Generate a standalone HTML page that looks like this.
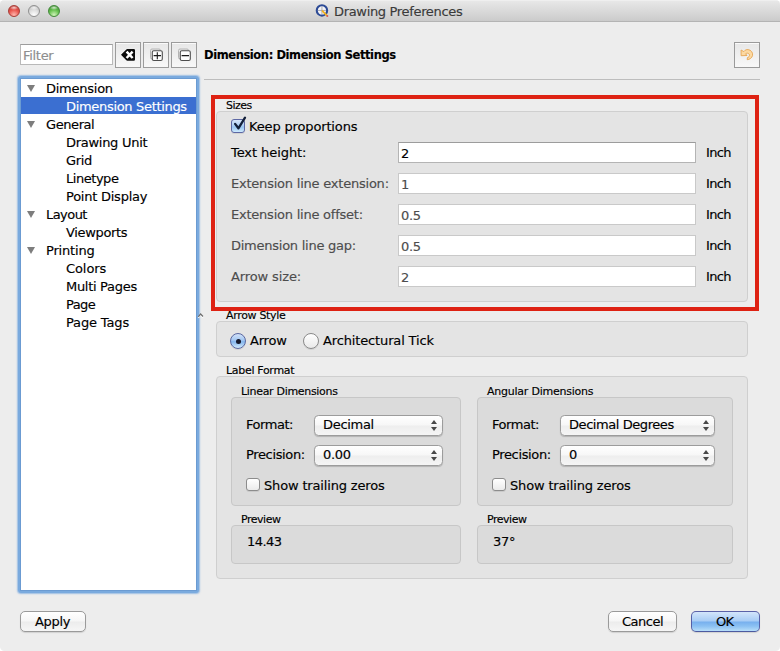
<!DOCTYPE html>
<html><head><meta charset="utf-8"><title>Drawing Preferences</title>
<style>
*{box-sizing:border-box;margin:0;padding:0}
html,body{width:780px;height:651px;background:#fff;overflow:hidden}
body{font-family:"DejaVu Sans","Liberation Sans",sans-serif;font-size:13px;color:#000;position:relative}
.win{position:absolute;left:0;top:0;width:780px;height:651px;background:#ededed;border-radius:4.5px;overflow:hidden}
.tb{position:absolute;left:0;top:0;width:780px;height:22px;background:linear-gradient(#f3f3f3 0,#e7e7e7 1.5px,#cbcbcb 21px);border-bottom:1px solid #b4b4b4}
.tl{position:absolute;top:4.5px;width:12px;height:12px;border-radius:50%}
.t{position:absolute;white-space:nowrap;line-height:16px;height:16px;letter-spacing:-0.3px;-webkit-text-stroke:.15px currentColor}
.s{font-size:11px;line-height:14px;height:14px;letter-spacing:-0.2px}
.g{color:#4d4d4d}
.gb{position:absolute;background:#e4e4e4;border:1px solid #cfcfcf;border-radius:4px}
.gb2{position:absolute;background:#dbdbdb;border:1px solid #c7c7c7;border-radius:4px}
.inp{position:absolute;left:398px;width:298px;height:21px;background:#fff;border:1px solid #c9c9c9}
.inp.en{border-color:#9c9c9c #b4b4b4 #b4b4b4 #b4b4b4}
.btn{position:absolute;top:611px;height:21px;border:1px solid #9a9a9a;border-radius:5px;background:linear-gradient(#ffffff,#f6f6f6 48%,#ececec 52%,#f6f6f6);box-shadow:0 1px 1px rgba(0,0,0,.12)}
.btn.ok{border-color:#5b62a8 #5560a8 #4c5aa0;background:linear-gradient(#d3e5fb,#a8ccf5 47%,#77b0ee 53%,#8cc1f3 75%,#b8def9)}
.tbtn{position:absolute;top:42px;width:26px;height:26px;border:1px solid #9c9c9c;background:linear-gradient(#e7e7e7,#f8f8f8);box-shadow:inset 0 1px 0 rgba(255,255,255,.8)}
.sel{position:absolute;height:21px;border:1px solid #9c9c9c;border-radius:4.5px;background:linear-gradient(#ffffff,#f7f7f7 48%,#eeeeee 52%,#f5f5f5);box-shadow:0 1px 1px rgba(0,0,0,.18)}
.sel i{position:absolute;right:5px;width:0;height:0;border-left:3px solid transparent;border-right:3px solid transparent}
.sel i.u{top:4px;border-bottom:4.5px solid #484848}
.sel i.d{top:10.7px;border-top:4.5px solid #484848}
.cb{position:absolute;width:14px;height:13px;border:1px solid #8c8c8c;border-radius:3px;background:linear-gradient(#ffffff,#ebebeb);box-shadow:0 1px 0 rgba(0,0,0,.08)}
.cb.on{height:13.5px;border-color:#5d68a4;background:linear-gradient(#d8e6fa,#abcdf4 48%,#98c5f2 58%,#cdeafd)}
.rb{position:absolute;width:16px;height:16px;border:1px solid #8a8a8a;border-radius:50%;background:linear-gradient(#ffffff,#e9e9e9);box-shadow:0 1px 0 rgba(0,0,0,.08)}
.rb.on{border-color:#5a67a0;background:linear-gradient(#d2e2f9,#a2c6f1 45%,#84b5ec 55%,#d2eafc)}
.rb.on:after{content:"";position:absolute;left:4.5px;top:4.5px;width:5px;height:5px;border-radius:50%;background:#15182a}
.tri{position:absolute;left:27px;width:0;height:0;border-left:4.5px solid transparent;border-right:4.5px solid transparent;border-top:7.5px solid #7d7d7d}
.ring{position:absolute;left:18px;top:76px;width:181px;height:517px;border-radius:3.5px;background:#7aaade;box-shadow:0 0 1.5px .5px rgba(122,170,222,.7)}
.tree{position:absolute;left:21px;top:79px;width:175px;height:511px;background:#fff;box-shadow:0 0 0 1px #6b9bd2}
.row{position:absolute;left:21px;width:175px;height:17px;background:#3b6fd1}
</style></head><body>
<div class="win">
<div class="tb">
 <div class="tl" style="left:8px;background:radial-gradient(ellipse 45% 22% at 50% 17%,rgba(255,255,255,.75),rgba(255,255,255,0)),radial-gradient(circle at 50% 90%,#ffb9b0 0,#ea5850 50%,#b9362f 95%);border:1px solid #a63d37"></div>
 <div class="tl" style="left:28px;background:radial-gradient(ellipse 45% 22% at 50% 17%,rgba(255,255,255,.75),rgba(255,255,255,0)),radial-gradient(circle at 50% 90%,#ffffff 0,#dedede 50%,#b4b4b4 95%);border:1px solid #8f8f8f"></div>
 <div class="tl" style="left:48px;background:radial-gradient(ellipse 45% 22% at 50% 17%,rgba(255,255,255,.75),rgba(255,255,255,0)),radial-gradient(circle at 50% 90%,#d2f4bc 0,#68c250 50%,#37882a 95%);border:1px solid #42893a"></div>
 <svg style="position:absolute;left:314px;top:2px" width="17" height="17" viewBox="0 0 17 17"><circle cx="7.95" cy="8.45" r="5.2" fill="#f4f4f6" stroke="#2d4b96" stroke-width="2.1"/><path d="M7.95 4.5v7.8M4 8.45h7.9" stroke="#9a9aa4" stroke-width=".8"/><path d="M8.6 9.1l4.1 4.2" stroke="#f2b21f" stroke-width="1.9" stroke-linecap="round"/><circle cx="13.3" cy="14.1" r="1" fill="#d4555a"/></svg>
 <div class="t" id="title" style="letter-spacing:-0.33px;left:334px;top:4px;color:#3a3a3a">Drawing Preferences</div>
</div>

<!-- filter row -->
<div style="position:absolute;left:20px;top:44px;width:93px;height:21px;background:#fff;border:1px solid #b9b9b9;border-top-color:#9d9d9d"></div>
<div class="t" id="filter" style="left:23px;top:48px;color:#8e8e8e">Filter</div>
<div class="tbtn" style="left:115px"><svg width="24" height="24" viewBox="0 0 24 24" style="position:absolute;left:0;top:0"><path d="M5 11.85l5.300-5.400a1.400 1.400 0 0 1 1-.45h6.500a1.200 1.200 0 0 1 1.200 1.200v9.300a1.200 1.200 0 0 1-1.200 1.200h-6.500a1.400 1.400 0 0 1-1-.45z" fill="#0c0c0c"/><path d="M10.600 8.700l6 6.300M16.600 8.700l-6 6.300" stroke="#fff" stroke-width="2.500"/></svg></div>
<div class="tbtn" style="left:143px"><svg width="24" height="24" viewBox="0 0 24 24" style="position:absolute;left:0;top:0"><rect x="6.500" y="6" width="10" height="10" rx="1.500" fill="#e9e9e9" stroke="#b4b4b4" stroke-width="1"/><rect x="8.300" y="7.800" width="10" height="9.700" rx="1.500" fill="#fdfdfd" stroke="#4e4e4e" stroke-width="1.100"/><path d="M9.600 12.650h7.400M13.300 9.200v7" stroke="#1a1a1a" stroke-width="1.100"/></svg></div>
<div class="tbtn" style="left:171px"><svg width="24" height="24" viewBox="0 0 24 24" style="position:absolute;left:0;top:0"><rect x="6.500" y="6" width="10" height="10" rx="1.500" fill="#e9e9e9" stroke="#b4b4b4" stroke-width="1"/><rect x="8.300" y="7.800" width="10" height="9.700" rx="1.500" fill="#fdfdfd" stroke="#4e4e4e" stroke-width="1.100"/><path d="M9.600 12.650h7.400" stroke="#1a1a1a" stroke-width="1.100"/></svg></div>
<div class="t" id="hdr" style="letter-spacing:-0.41px;left:204px;top:47px;font-weight:bold;font-size:11.5px">Dimension: Dimension Settings</div>
<div class="tbtn" style="left:734px;border-color:#9a9a9a"><svg width="24" height="24" viewBox="0 0 24 24" style="position:absolute;left:0;top:0"><path d="M6.100 7L6.100 12.700L12 12.500L10.600 10.800C11.500 10.100 12.500 10 13.300 10.400C14.600 11 14.800 12.600 14 13.600C13.600 14.200 13 14.500 12.400 14.600L12.200 16.700C14.500 16.600 17 15 17.600 12.300C18 9.500 16 7 13.200 6.600C11.500 6.400 10 7 8.800 8.600Z" fill="#fcd9a2" stroke="#e5a552" stroke-width=".9" stroke-linejoin="round"/></svg></div>
<div style="position:absolute;left:204px;top:79px;width:556px;height:1px;background:#bdbdbd"></div>

<!-- tree -->
<div class="ring"></div><div class="tree"></div>
<div class="row" style="top:97px"></div>
<div class="tri" style="top:85px"></div>
<div class="t" id="tr0" style="letter-spacing:-0.25px;left:46px;top:81px">Dimension</div>
<div class="t" id="tr1" style="letter-spacing:-0.32px;left:66px;top:99px;color:#fff">Dimension Settings</div>
<div class="tri" style="top:121px"></div>
<div class="t" id="tr2" style="letter-spacing:-0.42px;left:46px;top:117px">General</div>
<div class="t" id="tr3" style="letter-spacing:-0.28px;left:66px;top:135px">Drawing Unit</div>
<div class="t" id="tr4" style="letter-spacing:-0.31px;left:66px;top:153px">Grid</div>
<div class="t" id="tr5" style="letter-spacing:-0.46px;left:66px;top:171px">Linetype</div>
<div class="t" id="tr6" style="letter-spacing:-0.24px;left:66px;top:189px">Point Display</div>
<div class="tri" style="top:211px"></div>
<div class="t" id="tr7" style="letter-spacing:-0.55px;left:46px;top:207px">Layout</div>
<div class="t" id="tr8" style="letter-spacing:-0.34px;left:66px;top:225px">Viewports</div>
<div class="tri" style="top:247px"></div>
<div class="t" id="tr9" style="letter-spacing:-0.19px;left:46px;top:243px">Printing</div>
<div class="t" id="tr10" style="letter-spacing:-0.08px;left:66px;top:261px">Colors</div>
<div class="t" id="tr11" style="letter-spacing:-0.3px;left:66px;top:279px">Multi Pages</div>
<div class="t" id="tr12" style="letter-spacing:-0.57px;left:66px;top:297px">Page</div>
<div class="t" id="tr13" style="letter-spacing:-0.15px;left:66px;top:315px">Page Tags</div>
<!-- sizes -->
<div class="gb" style="left:216px;top:111px;width:532px;height:191px"></div>
<div class="t s" id="l_sizes" style="letter-spacing:-0.51px;left:226px;top:99px">Sizes</div>
<div class="cb on" style="left:231px;top:119px"></div>
<svg style="position:absolute;left:229px;top:113px" width="22" height="22" viewBox="0 0 22 22"><path d="M6.100 10.900L9.400 15.300L16 4.700" fill="none" stroke="#13203a" stroke-width="2.300" stroke-linecap="round" stroke-linejoin="round"/></svg>
<div class="t" id="keep" style="letter-spacing:-0.15px;left:249px;top:119px">Keep proportions</div>
<div class="t" id="rl0" style="letter-spacing:-0.07px;left:231px;top:145px">Text height:</div>
<div class="inp en" style="top:142px"></div>
<div class="t" id="rv0" style="left:401px;top:146px">2</div>
<div class="t" id="ru0" style="letter-spacing:-0.62px;left:706px;top:145px">Inch</div>
<div class="t g" id="rl1" style="letter-spacing:-0.22px;left:231px;top:176px">Extension line extension:</div>
<div class="inp" style="top:173px"></div>
<div class="t g" id="rv1" style="left:401px;top:177px">1</div>
<div class="t" id="ru1" style="letter-spacing:-0.62px;left:706px;top:176px">Inch</div>
<div class="t g" id="rl2" style="letter-spacing:-0.23px;left:231px;top:207px">Extension line offset:</div>
<div class="inp" style="top:204px"></div>
<div class="t g" id="rv2" style="left:401px;top:208px">0.5</div>
<div class="t" id="ru2" style="letter-spacing:-0.62px;left:706px;top:207px">Inch</div>
<div class="t g" id="rl3" style="letter-spacing:-0.25px;left:231px;top:238px">Dimension line gap:</div>
<div class="inp" style="top:235px"></div>
<div class="t g" id="rv3" style="left:401px;top:239px">0.5</div>
<div class="t" id="ru3" style="letter-spacing:-0.62px;left:706px;top:238px">Inch</div>
<div class="t g" id="rl4" style="letter-spacing:-0.12px;left:231px;top:269px">Arrow size:</div>
<div class="inp" style="top:266px"></div>
<div class="t g" id="rv4" style="left:401px;top:270px">2</div>
<div class="t" id="ru4" style="letter-spacing:-0.62px;left:706px;top:269px">Inch</div>
<div style="position:absolute;left:211px;top:95px;width:548px;height:216px;border:4px solid #de2213"></div>

<svg style="position:absolute;left:196px;top:311px" width="10" height="10" viewBox="0 0 10 10"><path d="M2.300 6.800L4.600 3.900L7 6.500" fill="none" stroke="#fff" stroke-width="1.200"/><path d="M2.300 5.800L4.600 3L7 5.500" fill="none" stroke="#6e6e6e" stroke-width="1.200"/></svg>
<!-- arrow style -->
<div class="t s" id="l_arrow" style="letter-spacing:-0.32px;left:226px;top:309px">Arrow Style</div>
<div class="gb" style="left:216px;top:321px;width:532px;height:36px"></div>
<div class="rb on" style="left:230px;top:333px"></div>
<div class="t" id="arrow" style="letter-spacing:-0.21px;left:250px;top:333px">Arrow</div>
<div class="rb" style="left:303px;top:333px"></div>
<div class="t" id="tick" style="letter-spacing:-0.14px;left:323px;top:333px">Architectural Tick</div>

<!-- label format -->
<div class="t s" id="l_label" style="letter-spacing:-0.31px;left:226px;top:364px">Label Format</div>
<div class="gb" style="left:216px;top:376px;width:532px;height:203px"></div>

<div class="t s" id="l_lin" style="letter-spacing:-0.31px;left:241px;top:385px">Linear Dimensions</div>
<div class="gb2" style="left:231px;top:397px;width:230px;height:109px"></div>
<div class="t" id="fmt1" style="letter-spacing:-0.45px;left:246px;top:417px">Format:</div>
<div class="sel" style="left:314px;top:415px;width:129px"><i class="u"></i><i class="d"></i></div>
<div class="t" id="dec1" style="left:323px;top:417px">Decimal</div>
<div class="t" id="prec1" style="letter-spacing:-0.36px;left:246px;top:447px">Precision:</div>
<div class="sel" style="left:314px;top:445px;width:129px"><i class="u"></i><i class="d"></i></div>
<div class="t" id="val1" style="left:323px;top:447px">0.00</div>
<div class="cb" style="left:246px;top:478px"></div>
<div class="t" id="show1" style="letter-spacing:-0.16px;left:264px;top:478px">Show trailing zeros</div>
<div class="t s" id="l_prev1" style="letter-spacing:-0.48px;left:241px;top:513px">Preview</div>
<div class="gb2" style="left:231px;top:525px;width:230px;height:39px"></div>
<div class="t" id="pv1" style="letter-spacing:-0.58px;left:247px;top:534px">14.43</div>

<div class="t s" id="l_ang" style="letter-spacing:-0.23px;left:487px;top:385px">Angular Dimensions</div>
<div class="gb2" style="left:477px;top:397px;width:256px;height:109px"></div>
<div class="t" id="fmt2" style="letter-spacing:-0.45px;left:492px;top:417px">Format:</div>
<div class="sel" style="left:560px;top:415px;width:155px"><i class="u"></i><i class="d"></i></div>
<div class="t" id="dec2" style="letter-spacing:-0.43px;left:569px;top:417px">Decimal Degrees</div>
<div class="t" id="prec2" style="letter-spacing:-0.36px;left:492px;top:447px">Precision:</div>
<div class="sel" style="left:560px;top:445px;width:155px"><i class="u"></i><i class="d"></i></div>
<div class="t" id="val2" style="left:569px;top:447px">0</div>
<div class="cb" style="left:492px;top:478px"></div>
<div class="t" id="show2" style="letter-spacing:-0.16px;left:510px;top:478px">Show trailing zeros</div>
<div class="t s" id="l_prev2" style="letter-spacing:-0.48px;left:487px;top:513px">Preview</div>
<div class="gb2" style="left:477px;top:525px;width:256px;height:39px"></div>
<div class="t" id="pv2" style="left:493px;top:534px">37°</div>

<!-- buttons -->
<div class="btn" style="left:20px;width:66px"></div>
<div class="t" id="apply" style="letter-spacing:-0.29px;left:35px;top:614px">Apply</div>
<div class="btn" style="left:608px;width:69px"></div>
<div class="t" id="cancel" style="letter-spacing:-0.5px;left:622px;top:614px">Cancel</div>
<div class="btn ok" style="left:691px;width:69px"></div>
<div class="t" id="ok" style="letter-spacing:-0.84px;left:716px;top:614px">OK</div>
</div>
</body></html>
